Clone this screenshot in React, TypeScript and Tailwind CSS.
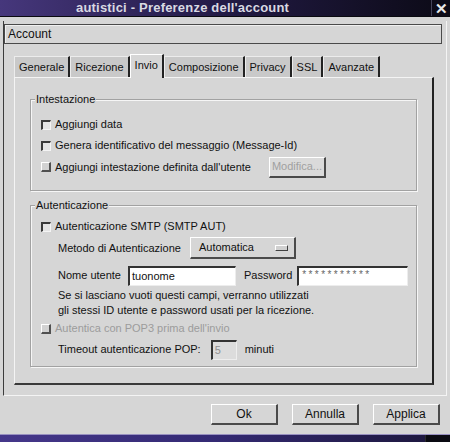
import React from "react";

const raised = "border-t border-l border-t-white border-l-white border-r-2 border-b-2 border-r-[#4a4a4a] border-b-[#4a4a4a]";

function Check({ checked }: { checked: boolean }) {
  return checked ? (
    <span className="inline-block w-[10px] h-[10px] shrink-0 bg-[#e4e4e4] border-t-2 border-l-2 border-t-[#3a3a3a] border-l-[#3a3a3a] border-r border-b border-r-[#f4f4f4] border-b-[#f4f4f4]" />
  ) : (
    <span className="inline-block w-[10px] h-[10px] shrink-0 bg-[#d2d2d2] border-t border-l border-t-white border-l-white border-r-2 border-b-2 border-r-[#505050] border-b-[#505050]" />
  );
}

function Group({ label, children, className }: { label: string; children: React.ReactNode; className?: string }) {
  return (
    <div className={"relative mx-[15px] border border-[#a2a2a2] shadow-[1px_1px_0_#f6f6f6,inset_1px_1px_0_#f6f6f6] " + (className ?? "")}>
      <span className="absolute -top-[8px] left-[4px] px-[1px] bg-[#d6d6d6] leading-[14px]">{label}</span>
      {children}
    </div>
  );
}

export default function App() {
  const tabs = ["Generale", "Ricezione", "Invio", "Composizione", "Privacy", "SSL", "Avanzate"];
  return (
    <div
      className="w-[450px] h-[442px] bg-[#d6d6d6] flex flex-col text-[11px] text-[#111] overflow-hidden"
      style={{ fontFamily: '"Liberation Sans", Arial, sans-serif' }}
    >
      {/* title bar */}
      <div className="h-[17px] flex bg-gradient-to-r from-[#46377c] via-[#221a45] to-[#0c0a16] border-b border-b-[#0a0a10]">
        <div className="flex-1 pl-[76px] text-[13px] font-bold leading-[16px] text-[#d9d9e2] tracking-[0.2px]">
          autistici - Preferenze dell'account
        </div>
        <div className="w-[19px] border-l border-l-[#44445a] flex items-center justify-center text-[#e8e8e8] text-[15px] font-bold leading-none">
          ✕
        </div>
      </div>

      {/* body */}
      <div className="flex-1 flex flex-col">
        <div className="mt-[4px] ml-[3px] w-[444px] h-[375px] border-l border-l-[#3c3c3c] border-r border-r-[#f4f4f4] border-b border-b-[#f4f4f4] flex flex-col">
          <div className="mt-[3px] w-[438px] h-[20px] border border-[#4a4a4a] shadow-[inset_1px_1px_0_#f0f0f0] flex items-center pl-[3px] text-[12px]">
            Account
          </div>
          {/* tabs */}
          <div className="ml-[10px] mt-[10px] flex items-end h-[23px]">
            {tabs.map((t) =>
              t === "Invio" ? (
                <div
                  key={t}
                  className="h-[24px] -mb-[1px] relative z-10 px-[4px] pb-[3px] flex items-center bg-[#d6d6d6] border-t border-l border-t-white border-l-white border-r-2 border-r-[#222]"
                >
                  {t}
                </div>
              ) : (
                <div
                  key={t}
                  className="h-[21px] px-[4px] flex items-center bg-[#c9c9c9] border-t border-l border-t-[#ececec] border-l-[#ececec] border-r-2 border-r-[#222]"
                >
                  {t}
                </div>
              )
            )}
          </div>
          {/* panel */}
          <div className="ml-[10px] w-[420px] h-[308px] border-t border-l border-t-[#f4f4f4] border-l-[#f4f4f4] border-r-2 border-b-2 border-r-[#222] border-b-[#3a3a3a] flex flex-col">
            <Group label="Intestazione" className="mt-[21px] h-[92px] pt-[14px]">
              <div className="h-[21px] flex items-center pl-[10px] gap-[4px]">
                <Check checked />
                <span>Aggiungi data</span>
              </div>
              <div className="h-[21px] flex items-center pl-[10px] gap-[4px]">
                <Check checked />
                <span>Genera identificativo del messaggio (Message-Id)</span>
              </div>
              <div className="h-[22px] flex items-center pl-[10px] gap-[4px]">
                <Check checked={false} />
                <span>Aggiungi intestazione definita dall'utente</span>
                <div className={"ml-[14px] w-[57px] h-[21px] flex items-center justify-center text-[#a0a0a0] bg-[#dadada] " + raised}>
                  Modifica...
                </div>
              </div>
            </Group>

            <Group label="Autenticazione" className="mt-[14px] h-[162px] pt-[10px]">
              <div className="h-[21px] flex items-center pl-[10px] gap-[4px]">
                <Check checked />
                <span>Autenticazione SMTP (SMTP AUT)</span>
              </div>
              <div className="h-[22px] flex items-center pl-[27px]">
                <span>Metodo di Autenticazione</span>
                <div className={"ml-[9px] w-[106px] h-[22px] flex items-center pl-[8px] pr-[6px] justify-between " + raised}>
                  <span>Automatica</span>
                  <span className="w-[13px] h-[6px] bg-[#d0d0d0] border-t border-l border-t-white border-l-white border-r border-b border-r-[#404040] border-b-[#404040]" />
                </div>
              </div>
              <div className="mt-[6px] h-[21px] flex items-center pl-[27px]">
                <span>Nome utente</span>
                <div className="ml-[7px] w-[108px] h-[20px] bg-white border-t-2 border-l-2 border-t-[#333] border-l-[#333] border-r border-b border-r-[#ededed] border-b-[#ededed] flex items-center pl-[2px]">
                  tuonome
                </div>
                <span className="ml-[8px]">Password</span>
                <div className="ml-[5px] w-[111px] h-[20px] bg-white border-t-2 border-l-2 border-t-[#333] border-l-[#333] border-r border-b border-r-[#ededed] border-b-[#ededed] flex items-start pt-[1px] pl-[3px] text-[10px] text-[#666] tracking-[2.4px] leading-[12px]">
                  ***********
                </div>
              </div>
              <div className="mt-[2px] pl-[27px] leading-[15px]">
                <div>Se si lasciano vuoti questi campi, verranno utilizzati</div>
                <div>gli stessi ID utente e password usati per la ricezione.</div>
              </div>
              <div className="h-[21px] flex items-center pl-[10px] gap-[4px]">
                <Check checked={false} />
                <span className="text-[#9c9c9c]">Autentica con POP3 prima dell'invio</span>
              </div>
              <div className="h-[21px] flex items-center pl-[27px]">
                <span>Timeout autenticazione POP:</span>
                <div className="ml-[10px] w-[26px] h-[20px] bg-[#dcdcdc] border-t-2 border-l-2 border-t-[#333] border-l-[#333] border-r border-b border-r-[#ededed] border-b-[#ededed] flex items-center pl-[2px] text-[#909090]">
                  5
                </div>
                <span className="ml-[8px]">minuti</span>
              </div>
            </Group>
          </div>
        </div>

        {/* buttons */}
        <div className="mt-[8px] flex justify-end gap-[14px] pr-[10px]">
          {["Ok", "Annulla", "Applica"].map((b) => (
            <div key={b} className={"w-[67px] h-[21px] flex items-center justify-center text-[12px] " + raised}>
              {b}
            </div>
          ))}
        </div>
      </div>

      {/* bottom bar */}
      <div className="h-[8px] flex border-t border-t-[#9890c0]">
        <div className="w-[425px] bg-gradient-to-r from-[#45378a] via-[#342a74] to-[#1e1840]" />
        <div className="flex-1 bg-[#0a0a12] border-l border-l-[#2a2a2a]" />
      </div>
    </div>
  );
}
